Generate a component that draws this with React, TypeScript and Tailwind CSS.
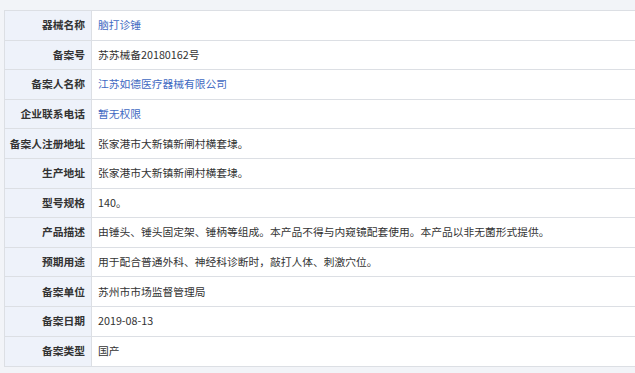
const rows: { label: string; value: string; link?: boolean }[] = [
  { label: '器械名称', value: '脑打诊锤', link: true },
  { label: '备案号', value: '苏苏械备20180162号' },
  { label: '备案人名称', value: '江苏如德医疗器械有限公司', link: true },
  { label: '企业联系电话', value: '暂无权限', link: true },
  { label: '备案人注册地址', value: '张家港市大新镇新闸村横套埭。' },
  { label: '生产地址', value: '张家港市大新镇新闸村横套埭。' },
  { label: '型号规格', value: '140。' },
  { label: '产品描述', value: '由锤头、锤头固定架、锤柄等组成。本产品不得与内窥镜配套使用。本产品以非无菌形式提供。' },
  { label: '预期用途', value: '用于配合普通外科、神经科诊断时，敲打人体、刺激穴位。' },
  { label: '备案单位', value: '苏州市市场监督管理局' },
  { label: '备案日期', value: '2019-08-13' },
  { label: '备案类型', value: '国产' },
];

export default function App() {
  return (
    <div
      className="w-[635px] h-[373px] overflow-hidden bg-[#f2f4f8] pt-[10px] pl-[4px]"
      style={{ fontFamily: '"Microsoft YaHei", "Noto Sans CJK SC", sans-serif' }}
    >
      <div className="w-[634px] border border-[#dcdfe4] bg-white">
        {rows.map((row, i) => (
          <div
            key={row.label}
            className={`flex h-[29.6px] ${i < rows.length - 1 ? 'border-b border-[#dcdfe4]' : ''}`}
          >
            <div className="w-[87px] shrink-0 bg-[#eef2fa] border-r border-[#dcdfe4] flex items-center justify-end pr-[6px] text-[10.75px] font-bold text-[#333]">
              {row.label}
            </div>
            <div
              className={`flex-1 flex items-center pl-[6px] text-[10.75px] whitespace-nowrap ${
                row.link ? 'text-[#3f6ac2]' : 'text-[#333]'
              }`}
            >
              {row.value}
            </div>
          </div>
        ))}
      </div>
    </div>
  );
}
